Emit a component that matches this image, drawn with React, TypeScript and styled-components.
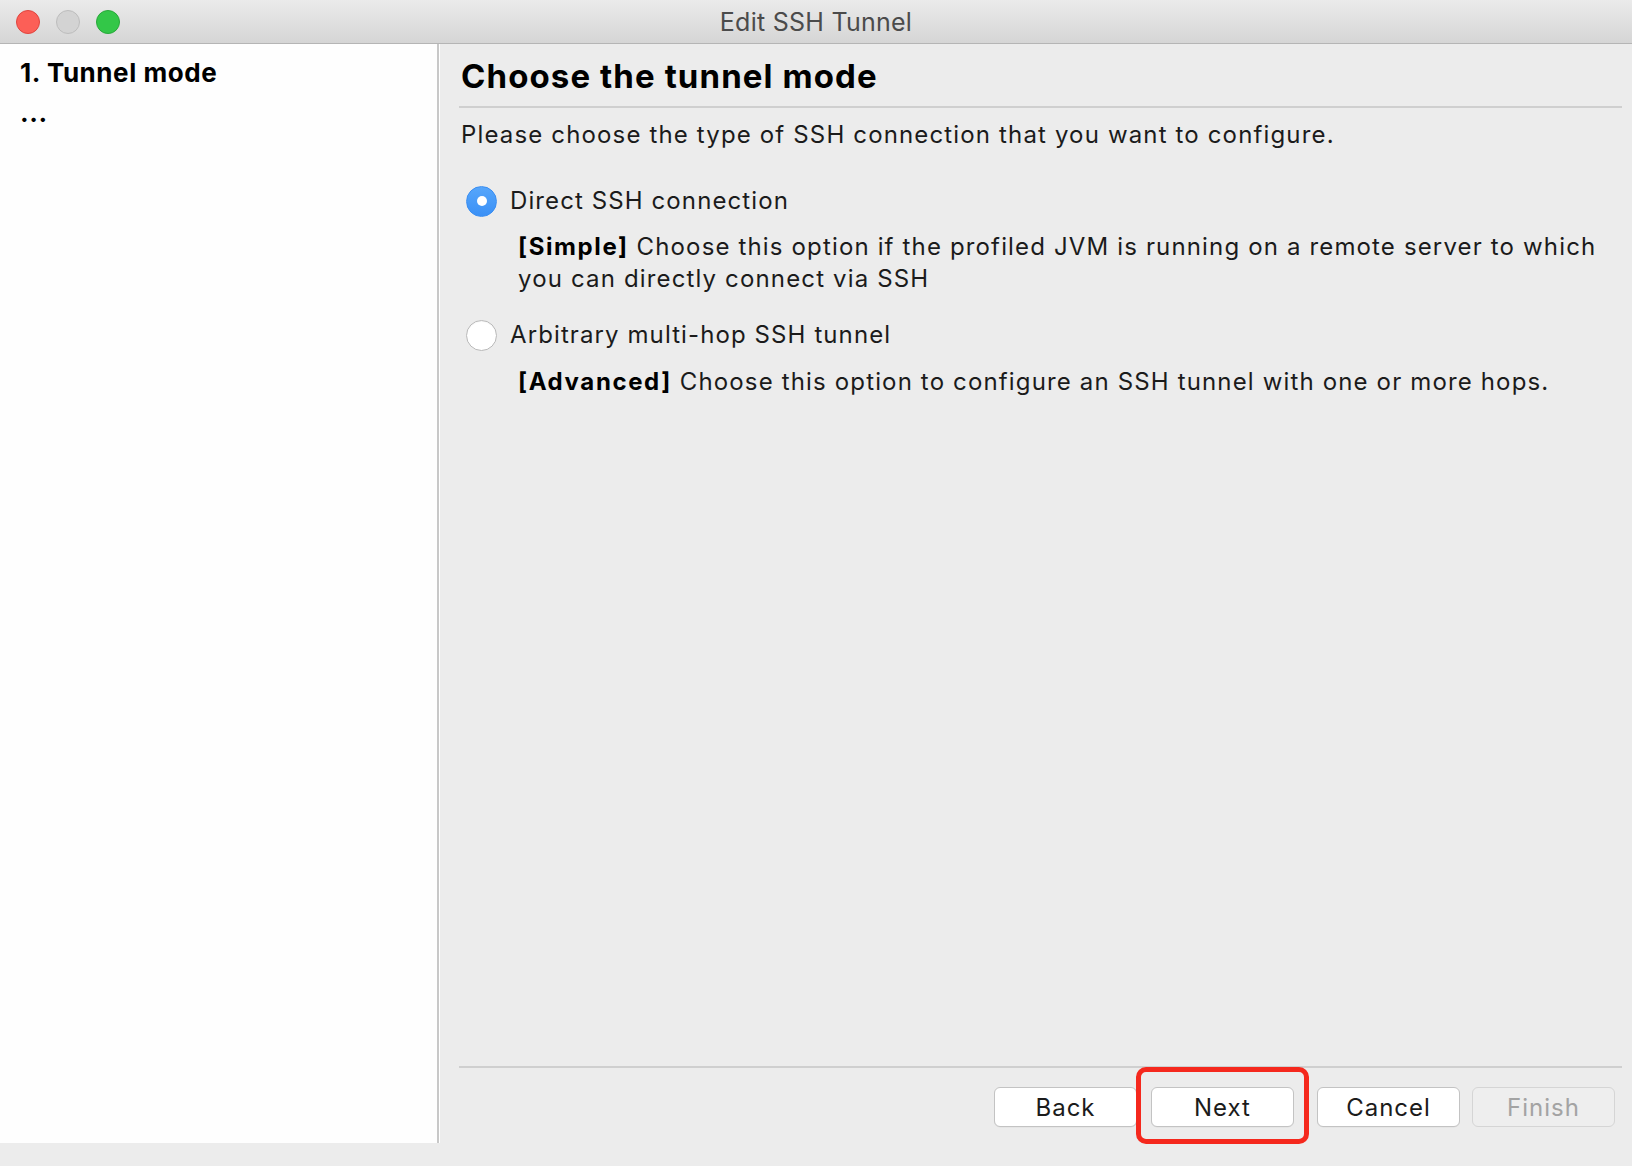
import React from 'react';
import styled, { createGlobalStyle } from 'styled-components';

const GlobalStyle = createGlobalStyle`
  html, body {
    margin: 0;
    padding: 0;
    background: #ececec;
  }
  body {
    font-family: Inter, "Liberation Sans", Arial, sans-serif;
    color: #1b1b1b;
    -webkit-font-smoothing: antialiased;
  }
`;

const Window = styled.div`
  width: 1632px;
  height: 1166px;
  display: flex;
  flex-direction: column;
  background: #ececec;
  overflow: hidden;
`;

const TitleBar = styled.div`
  height: 43px;
  flex-shrink: 0;
  display: grid;
  grid-template-columns: 1fr auto 1fr;
  align-items: center;
  background: linear-gradient(#ebebeb, #d5d5d5);
  border-bottom: 1px solid #b5b5b5;
`;

const Lights = styled.div`
  display: flex;
  gap: 16px;
  padding-left: 16px;
`;

const Light = styled.span<{ $fill: string; $edge: string }>`
  width: 22px;
  height: 22px;
  border-radius: 50%;
  background: ${p => p.$fill};
  border: 1px solid ${p => p.$edge};
`;

const Title = styled.div`
  font-size: 25px;
  color: #4b4b4b;
  letter-spacing: 0.25px;
`;

const Body = styled.div`
  flex: 1;
  display: flex;
  min-height: 0;
`;

const Sidebar = styled.div`
  width: 439px;
  flex-shrink: 0;
  background: #fefefe;
  border-right: 2px solid #c8c8c8;
  box-shadow: 1px 0 0 #ffffff;
  padding: 9px 0 0 20px;
  box-sizing: border-box;
`;

const Step = styled.div<{ $current?: boolean }>`
  font-size: 26px;
  line-height: 40px;
  font-weight: ${p => (p.$current ? 700 : 400)};
  color: #000;
  letter-spacing: 0.55px;
`;

const Panel = styled.div`
  flex: 1;
  display: flex;
  flex-direction: column;
  padding: 12px 10px 16px 21px;
  margin-left: 1px;
  box-sizing: border-box;
`;

const Heading = styled.h1`
  margin: 0;
  font-size: 33px;
  line-height: 40px;
  font-weight: 700;
  color: #000;
  letter-spacing: 1.1px;
`;

const Rule = styled.div<{ $top?: number }>`
  height: 2px;
  background: #cfcfcf;
  margin-left: -2px;
  margin-top: ${p => p.$top ?? 0}px;
`;

const Text = styled.p`
  margin: 0;
  font-size: 24px;
  line-height: 32px;
  letter-spacing: 1.15px;
  color: #1b1b1b;
`;

const Intro = styled(Text)`
  margin-top: 11px;
`;

const Options = styled.div`
  display: flex;
  flex-direction: column;
  margin-top: 34px;
`;

const Option = styled.label<{ $first?: boolean }>`
  display: flex;
  align-items: center;
  gap: 13px;
  margin-top: ${p => (p.$first ? 0 : 24)}px;
  margin-left: 5px;
  font-size: 24px;
  line-height: 32px;
  letter-spacing: 1.1px;
`;

const Radio = styled.span<{ $checked?: boolean }>`
  width: 31px;
  height: 31px;
  border-radius: 50%;
  box-sizing: border-box;
  display: flex;
  align-items: center;
  justify-content: center;
  flex-shrink: 0;
  background: ${p => (p.$checked ? 'linear-gradient(#56a6fb, #3a90f6)' : '#ffffff')};
  border: 1px solid ${p => (p.$checked ? '#3a8ef2' : '#b9b9b9')};
  box-shadow: ${p => (p.$checked ? 'none' : 'inset 0 1px 1px rgba(0,0,0,0.04)')};

  &::after {
    content: '';
    width: 10px;
    height: 10px;
    border-radius: 50%;
    background: #ffffff;
    display: ${p => (p.$checked ? 'block' : 'none')};
  }
`;

const Hint = styled(Text)<{ $top: number }>`
  margin: ${p => p.$top}px 0 0 57px;

  b {
    font-weight: 700;
    color: #000;
    letter-spacing: 1.6px;
  }
`;

const Footer = styled.div`
  margin-top: auto;
  display: flex;
  flex-direction: column;
`;

const Buttons = styled.div`
  display: flex;
  justify-content: flex-end;
  padding: 19px 7px 0 0;
`;

const Button = styled.button<{ $space?: number; $disabled?: boolean }>`
  position: relative;
  width: 143px;
  height: 40px;
  margin-left: ${p => p.$space ?? 0}px;
  border-radius: 6px;
  border: 1px solid ${p => (p.$disabled ? '#d5d5d5' : '#c3c3c3')};
  background: ${p => (p.$disabled ? '#eeeeee' : '#ffffff')};
  box-shadow: ${p => (p.$disabled ? 'none' : '0 0.5px 0 rgba(0,0,0,0.06)')};
  font-family: inherit;
  font-size: 24px;
  letter-spacing: 1px;
  color: ${p => (p.$disabled ? '#a3a3a3' : '#1b1b1b')};
  padding: 0;
`;

const Callout = styled.span`
  position: absolute;
  left: -16px;
  right: -16px;
  top: -21px;
  bottom: -18px;
  border: 5px solid #f5281d;
  border-radius: 10px;
  pointer-events: none;
`;

const BottomStrip = styled.div`
  height: 23px;
  flex-shrink: 0;
  background: #ececec;
`;

export default function App() {
  return (
    <>
      <GlobalStyle />
      <Window>
        <TitleBar>
          <Lights>
            <Light $fill="#fc5f57" $edge="#e0443e" />
            <Light $fill="#d3d3d3" $edge="#bdbdbd" />
            <Light $fill="#33c748" $edge="#28a83a" />
          </Lights>
          <Title>Edit SSH Tunnel</Title>
          <div />
        </TitleBar>
        <Body>
          <Sidebar>
            <Step $current>1. Tunnel mode</Step>
            <Step $current>...</Step>
          </Sidebar>
          <Panel>
            <Heading>Choose the tunnel mode</Heading>
            <Rule $top={10} />
            <Intro>Please choose the type of SSH connection that you want to configure.</Intro>
            <Options>
              <Option $first>
                <Radio $checked />
                Direct SSH connection
              </Option>
              <Hint $top={14}>
                <b>[Simple]</b> Choose this option if the profiled JVM is running on a remote server to which
                you can directly connect via SSH
              </Hint>
              <Option>
                <Radio />
                Arbitrary multi-hop SSH tunnel
              </Option>
              <Hint $top={15}>
                <b>[Advanced]</b> Choose this option to configure an SSH tunnel with one or more hops.
              </Hint>
            </Options>
            <Footer>
              <Rule />
              <Buttons>
                <Button>Back</Button>
                <Button $space={14}>
                  Next
                  <Callout />
                </Button>
                <Button $space={23}>Cancel</Button>
                <Button $space={12} $disabled>Finish</Button>
              </Buttons>
            </Footer>
          </Panel>
        </Body>
        <BottomStrip />
      </Window>
    </>
  );
}
